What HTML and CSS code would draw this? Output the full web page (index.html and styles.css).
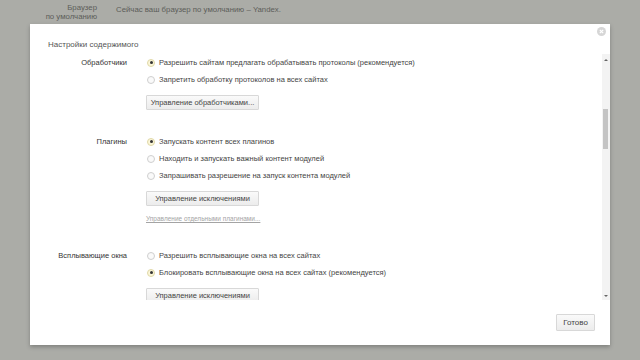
FILE: index.html
```html
<!DOCTYPE html>
<html lang="ru">
<head>
<meta charset="utf-8">
<link rel="stylesheet" href="styles.css">
</head>
<body>
<div class="page">
  <div class="page-row">
    <div class="page-label">Браузер<br>по умолчанию</div>
    <div class="page-value">Сейчас ваш браузер по умолчанию – Yandex.</div>
  </div>
</div>

<div class="dialog">
  <div class="dlg-head">
    <span class="dlg-title">Настройки содержимого</span>
    <span class="close"><svg width="9" height="9" viewBox="0 0 9 9"><circle cx="4.5" cy="4.5" r="4.5" fill="#d6d6d6"/><path d="M2.8 2.8l3.4 3.4M6.2 2.8l-3.4 3.4" stroke="#fff" stroke-width="1.2"/></svg></span>
  </div>
  <div class="dlg-body">
    <div class="content">
      <section class="sect">
        <div class="sect-label">Обработчики</div>
        <div class="sect-opts">
          <label class="opt"><span class="radio on"></span>Разрешить сайтам предлагать обрабатывать протоколы (рекомендуется)</label>
          <label class="opt"><span class="radio"></span>Запретить обработку протоколов на всех сайтах</label>
          <button class="btn">Управление обработчиками...</button>
        </div>
      </section>
      <section class="sect">
        <div class="sect-label">Плагины</div>
        <div class="sect-opts">
          <label class="opt"><span class="radio on"></span>Запускать контент всех плагинов</label>
          <label class="opt"><span class="radio"></span>Находить и запускать важный контент модулей</label>
          <label class="opt"><span class="radio"></span>Запрашивать разрешение на запуск контента модулей</label>
          <button class="btn">Управление исключениями</button>
          <a class="link">Управление отдельными плагинами...</a>
        </div>
      </section>
      <section class="sect">
        <div class="sect-label">Всплывающие окна</div>
        <div class="sect-opts">
          <label class="opt"><span class="radio"></span>Разрешить всплывающие окна на всех сайтах</label>
          <label class="opt"><span class="radio on"></span>Блокировать всплывающие окна на всех сайтах (рекомендуется)</label>
          <button class="btn">Управление исключениями</button>
        </div>
      </section>
    </div>
    <div class="scrollbar">
      <span class="arrow up"></span>
      <div class="track"><div class="thumb"></div></div>
      <span class="arrow down"></span>
    </div>
  </div>
  <div class="dlg-foot">
    <button class="btn done">Готово</button>
  </div>
</div>
</body>
</html>
```
FILE: styles.css
```css
* { box-sizing: border-box; }
html, body { margin: 0; height: 100%; }
body {
  background: #abaca7;
  font-family: "Liberation Sans", Arial, sans-serif;
  font-size: 7.5px;
  color: #444;
  overflow: hidden;
  position: relative;
}
.page { padding: 3px 0 0 0; font-size: 7.8px; }
.page-row {
  display: grid;
  grid-template-columns: 97px auto;
  column-gap: 19px;
  justify-content: start;
}
.page-label {
  text-align: right;
  color: #5c5d59;
  line-height: 9px;
}
.page-value { color: #5c5d59; padding-top: 2px; line-height: 10px; }

.dialog {
  position: absolute;
  left: 30px;
  top: 24px;
  width: 580px;
  height: 321px;
  background: #fff;
  box-shadow: 0 2px 4px rgba(0,0,0,0.25);
  display: flex;
  flex-direction: column;
}
.dlg-head {
  height: 30px;
  display: flex;
  justify-content: space-between;
  align-items: flex-start;
  padding: 16px 4px 0 18px;
}
.dlg-title { color: #555; line-height: 10px; font-size: 8px; }
.close { margin-top: -13px; display: block; height: 9px; }
.dlg-body {
  height: 246px;
  display: flex;
}
.content {
  flex: 1;
  overflow: hidden;
}
.sect {
  display: flex;
  gap: 19px;
  margin-bottom: 23px;
}
.sect-label {
  width: 97px;
  flex: none;
  text-align: right;
  color: #333;
  line-height: 17px;
}
.sect-opts { display: flex; flex-direction: column; align-items: flex-start; }
.opt {
  display: flex;
  align-items: center;
  height: 17px;
  color: #444;
  white-space: nowrap;
}
.radio {
  width: 8px;
  height: 8px;
  border-radius: 50%;
  border: 1px solid #cfcfcf;
  background: #fafafa;
  margin: 0 4px 0 1px;
  position: relative;
  flex: none;
}
.radio.on { border-color: #e0d8a8; background: #fbf6d8; }
.radio.on::after {
  content: "";
  position: absolute;
  left: 1.5px; top: 1.5px;
  width: 3px; height: 3px;
  border-radius: 50%;
  background: #333;
}
.btn {
  font-family: inherit;
  font-size: 7.5px;
  color: #444;
  height: 15px;
  padding: 0 8px;
  border: 1px solid #d8d8d8;
  border-radius: 1px;
  background: linear-gradient(#fafafa, #ececec);
  margin-top: 7px;
  line-height: 13px;
  white-space: nowrap;
}
.sect-opts .btn { width: 113px; padding: 0; }
.link {
  color: #a4a4a4;
  text-decoration: underline;
  font-size: 6.5px;
  margin-top: 8px;
  line-height: 10px;
}
.scrollbar {
  width: 8px;
  background: #f3f3f3;
  display: flex;
  flex-direction: column;
  align-items: center;
}
.arrow { width: 0; height: 0; border-left: 2px solid transparent; border-right: 2px solid transparent; flex: none; }
.arrow.up { border-bottom: 2px solid #666; margin: 5px 0 0; }
.arrow.down { border-top: 2px solid #666; margin: 0 0 3px; }
.track { flex: 1; width: 100%; position: relative; }
.thumb {
  position: absolute;
  left: 1px; right: 2px;
  top: 48px; height: 40px;
  background: #c4c4c4;
}
.dlg-foot {
  flex: 1;
  display: flex;
  justify-content: flex-end;
  align-items: flex-start;
  padding: 14px 15px 0 0;
}
.btn.done { height: 17px; width: 39px; padding: 0; margin: 0; font-size: 8px; }
```
